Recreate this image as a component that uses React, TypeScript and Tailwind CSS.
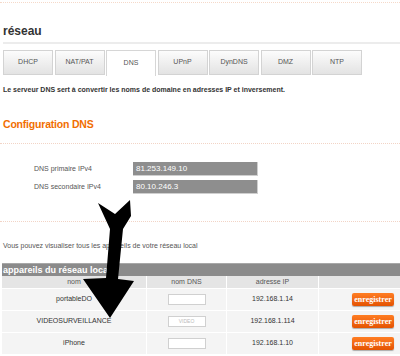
import React from "react";

const tabs = ["DHCP", "NAT/PAT", "DNS", "UPnP", "DynDNS", "DMZ", "NTP"];

const rows = [
  { name: "portableDO", dns: "", ip: "192.168.1.14" },
  { name: "VIDEOSURVEILLANCE", dns: "VIDEO", ip: "192.168.1.114" },
  { name: "iPhone", dns: "", ip: "192.168.1.10" },
];

export default function App() {
  return (
    <div className="relative w-[400px] h-[356px] overflow-hidden bg-white font-['Liberation_Sans',Arial,sans-serif]">
      <div className="h-[2px]" />
      <div className="border-t border-dotted border-[#f5d9c9]" />
      <div className="h-[21px]" />
      <h1 className="h-[15px] leading-[15px] pl-[3px] text-[12px] font-bold text-[#333]">réseau</h1>
      <div className="h-[3px]" />
      <div className="ml-[3px] h-[2px] bg-[#ececec]" />
      <div className="h-[6px]" />
      <div className="flex items-start gap-[1.5px] pl-[3px] h-[25px]">
        {tabs.map((t) => {
          const active = t === "DNS";
          return (
            <div
              key={t}
              className={
                active
                  ? "w-[50px] h-[26px] flex items-center justify-center border border-b-0 border-[#d6d6d6] bg-white text-[7px] text-[#555]"
                  : "w-[50px] h-[25px] flex items-center justify-center border border-[#d3d3d3] bg-gradient-to-b from-[#fcfcfc] to-[#e3e3e3] text-[7px] text-[#555]"
              }
            >
              {t}
            </div>
          );
        })}
      </div>
      <p className="mt-[10px] h-[10px] leading-[10px] pl-[3px] text-[7px] font-bold text-[#333]">
        Le serveur DNS sert à convertir les noms de domaine en adresses IP et inversement.
      </p>
      <h2 className="mt-[22px] h-[14px] leading-[14px] pl-[3px] text-[10.5px] font-bold text-[#f16e00] tracking-[-0.2px]">
        Configuration DNS
      </h2>
      <div className="mt-[12px] border-t border-dotted border-[#f2d4c6]" />
      <div className="mt-[18px] flex items-center h-[14px]">
        <div className="w-[133px] pl-[34px] text-[7px] text-[#555]">DNS primaire IPv4</div>
        <div className="w-[125px] h-[14px] flex items-center pl-[3px] bg-[#8e8e8e] border-r border-b border-[#cfcfcf] text-[8px] text-white">
          81.253.149.10
        </div>
      </div>
      <div className="mt-[4px] flex items-center h-[14px]">
        <div className="w-[133px] pl-[34px] text-[7px] text-[#555]">DNS secondaire IPv4</div>
        <div className="w-[125px] h-[14px] flex items-center pl-[3px] bg-[#8e8e8e] border-r border-b border-[#cfcfcf] text-[8px] text-white">
          80.10.246.3
        </div>
      </div>
      <div className="mt-[27px] border-t border-dotted border-[#f2d4c6]" />
      <p className="mt-[19px] h-[10px] leading-[10px] pl-[3px] text-[7px] text-[#555]">
        Vous pouvez visualiser tous les appareils de votre réseau local
      </p>
      <div className="mt-[12px] ml-[2px] h-[13px] leading-[13px] bg-[#8b8b8b] border-t border-[#a8a8a8] pl-[1px] text-[9px] font-bold text-white">
        appareils du réseau local
      </div>
      <div className="ml-[2px] grid grid-cols-[145px_80px_92px_81px] h-[13px] bg-[#e5e5e5] text-[7px] text-[#555]">
        <div className="flex items-center justify-center border-r border-b border-white">nom</div>
        <div className="flex items-center justify-center border-r border-b border-white">nom DNS</div>
        <div className="flex items-center justify-center border-r border-b border-white">adresse IP</div>
        <div className="border-b border-white" />
      </div>
      {rows.map((r) => (
        <div key={r.name} className="ml-[2px] grid grid-cols-[145px_80px_92px_81px] h-[22px] bg-[#f4f4f4] text-[7px] text-[#333]">
          <div className="flex items-center justify-center border-r border-b border-white">{r.name}</div>
          <div className="flex items-center justify-center border-r border-b border-white">
            <div className="w-[38px] h-[11px] bg-white border border-[#d0d0d0] flex items-center justify-center text-[5px] text-[#bbb]">
              {r.dns}
            </div>
          </div>
          <div className="flex items-center justify-center border-r border-b border-white">{r.ip}</div>
          <div className="flex items-center justify-end pr-[6px] border-b border-white">
            <div className="w-[42px] h-[13px] rounded-[2px] bg-gradient-to-b from-[#ff7d22] to-[#e45200] flex items-center justify-center text-[8px] font-bold text-white font-['Liberation_Serif',serif] shadow-[0_1px_1px_rgba(0,0,0,0.3)]">
              enregistrer
            </div>
          </div>
        </div>
      ))}
      <svg className="absolute left-0 top-0 pointer-events-none" width="400" height="356" viewBox="0 0 400 356">
        <polygon
          points="98,203 115,214 130,200 131,216 123,229 118,279 134,281 110,318 83,279 106,278 110,229"
          fill="#000"
        />
      </svg>
    </div>
  );
}
